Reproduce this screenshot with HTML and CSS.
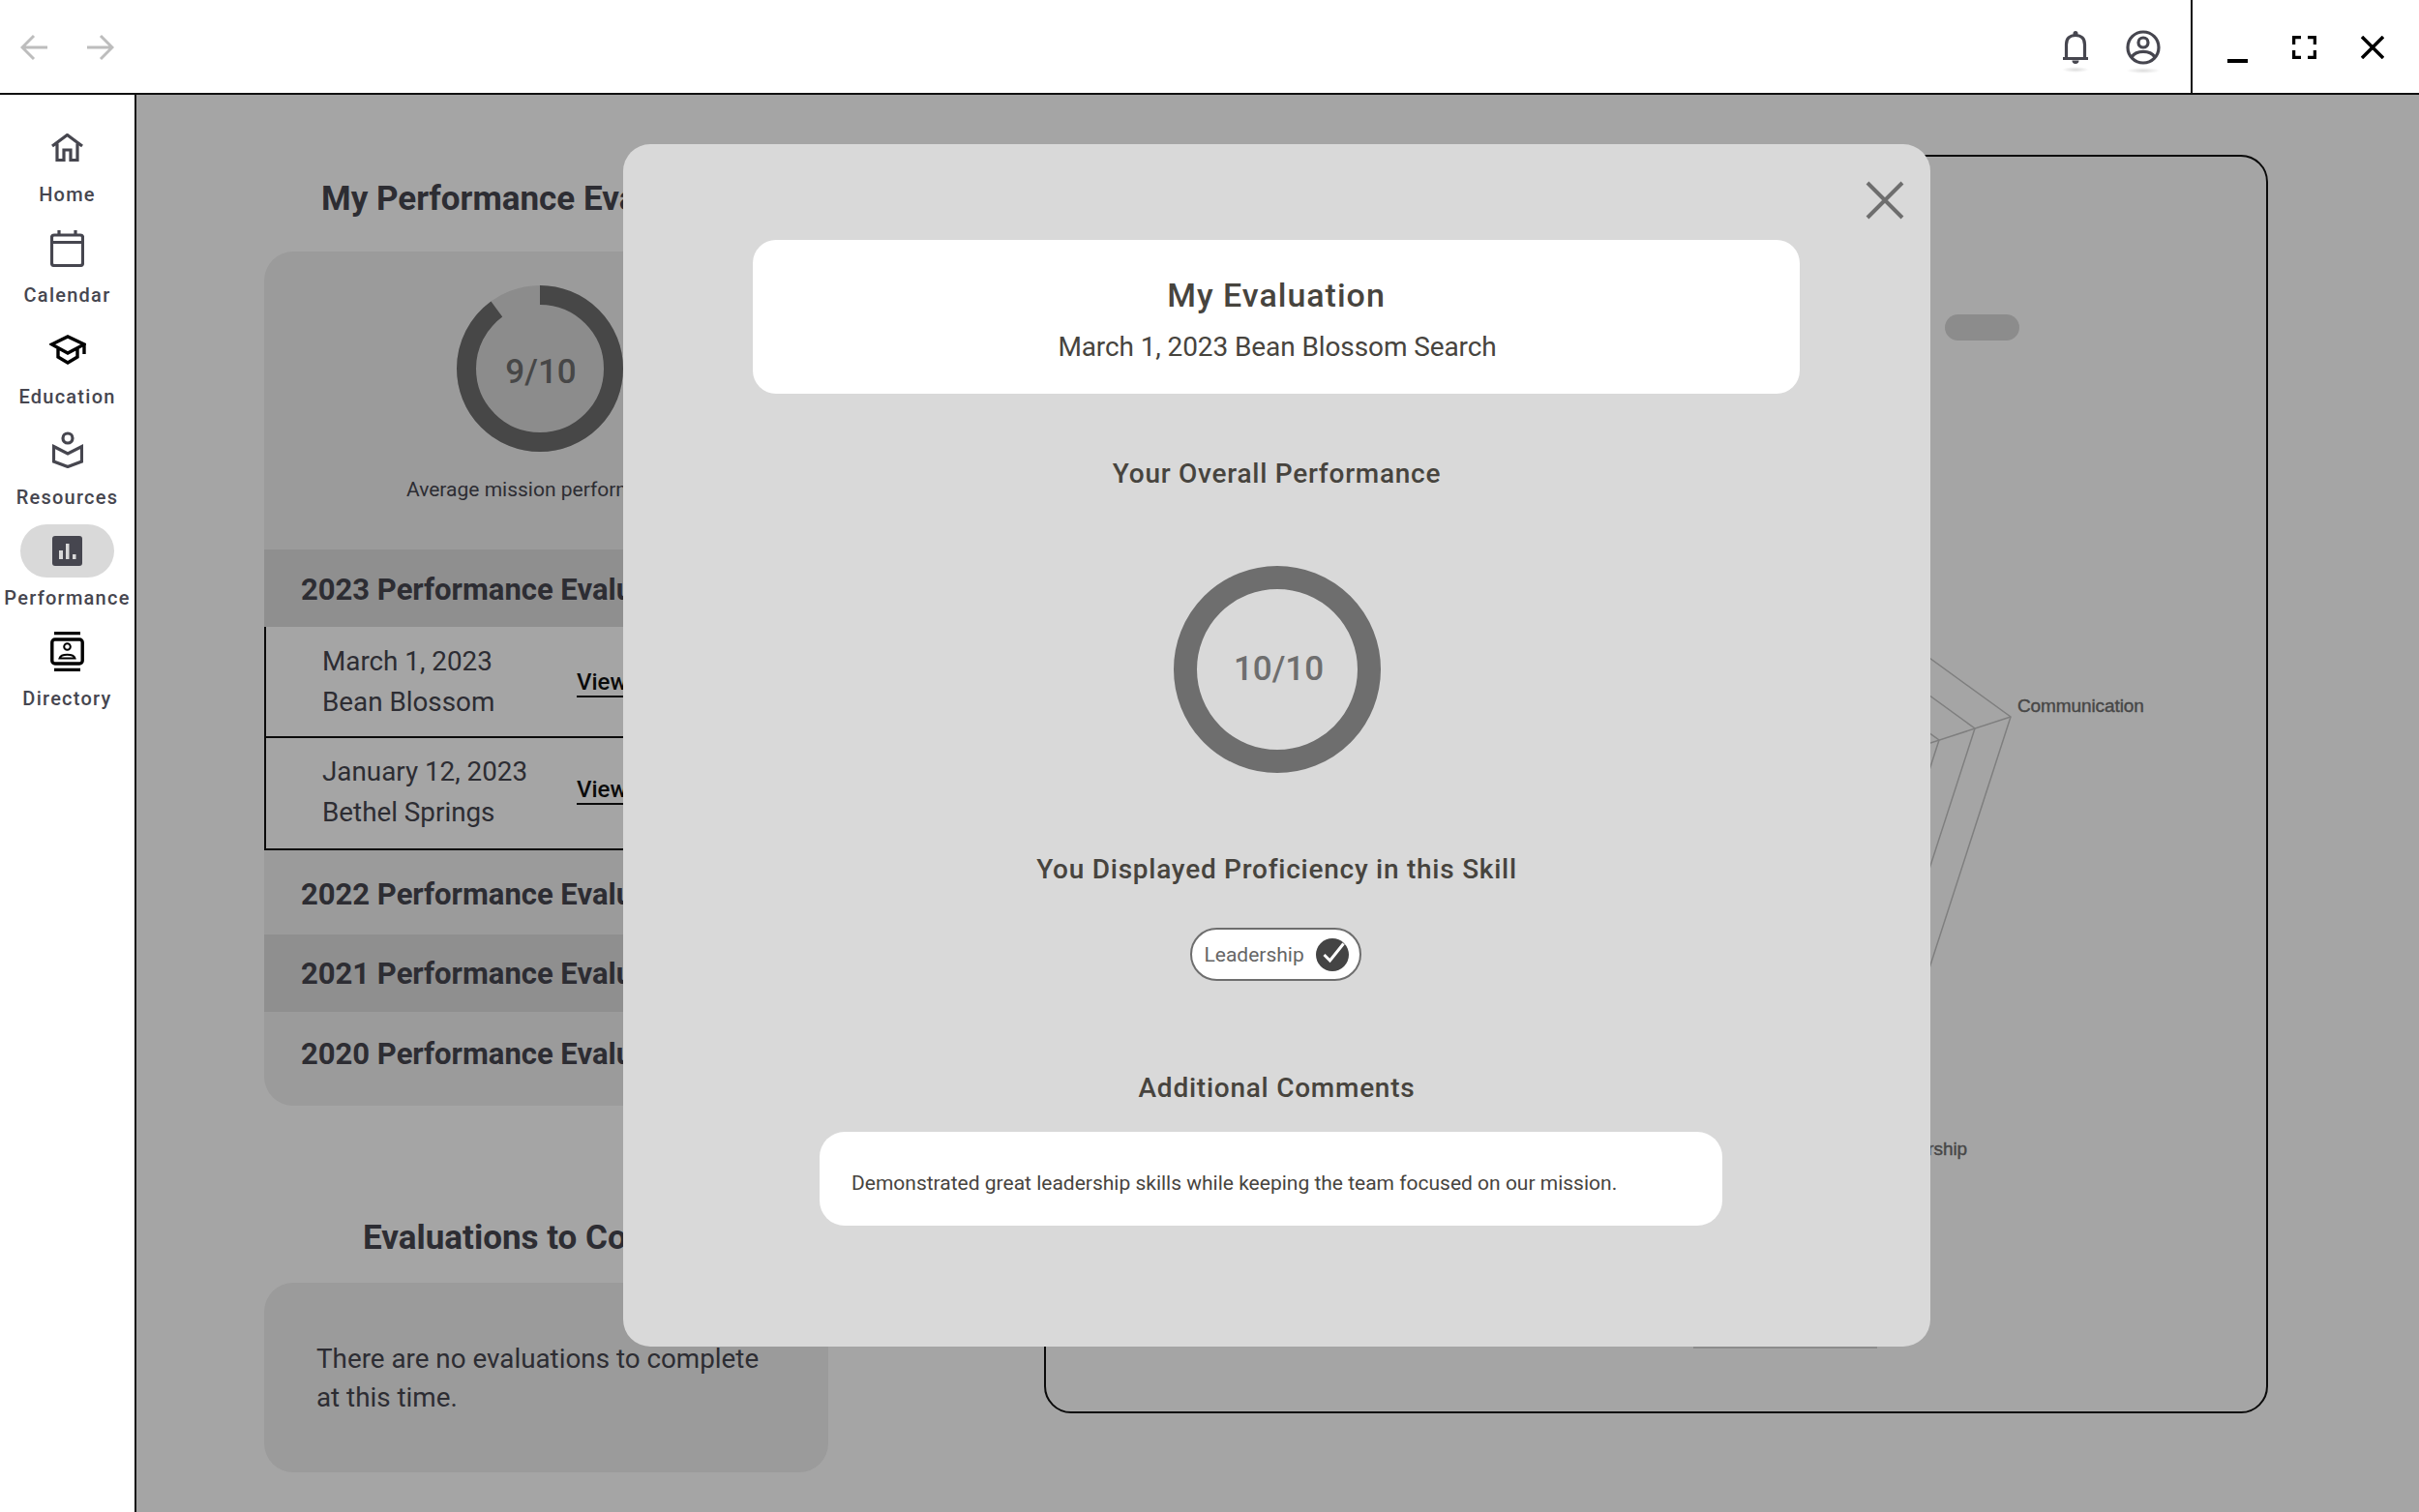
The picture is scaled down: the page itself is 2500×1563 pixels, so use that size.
FILE: index.html
```html
<!DOCTYPE html>
<html lang="en">
<head>
    <meta charset="UTF-8">
    <meta name="viewport" content="width=device-width, initial-scale=1.0">
    <title>My Evaluation</title>
    <link rel="stylesheet" href="styles.css">
</head>
<body>
    <header class="topbar">
        <div class="history">
            <svg width="28" height="28" viewBox="0 0 28 28"><path d="M28 14H2M14 2 2 14l12 12"/></svg>
            <svg width="28" height="28" viewBox="0 0 28 28"><path d="M0 14h26M14 2l12 12-12 12"/></svg>
        </div>
        <div class="top-icons">
            <span class="top-icon">
                <svg width="28" height="34" viewBox="0 0 28 34"><circle class="solid" cx="14" cy="2.5" r="2.5"/><path d="M4.5 28V14C4.5 8 8 4.5 14 4.5S23.500 8 23.500 14V28M1 28.500H27"/><path class="solid" d="M10.500 30.500h7a3.500 3.500 0 0 1-7 0z"/></svg>
            </span>
            <span class="top-icon">
                <svg width="36" height="36" viewBox="0 0 36 36"><circle cx="18" cy="18" r="16"/><circle cx="18" cy="13" r="5"/><path d="M6 28c5-7.500 19-7.500 24 0"/></svg>
            </span>
        </div>
        <div class="win-controls">
            <span class="win-min"></span>
            <svg width="25" height="24" viewBox="0 0 25 24"><path d="M1.500 9V1.500H9M16 1.500h7.500V9M23.500 15v7.500H16M9 22.500H1.500V15"/></svg>
            <svg width="24" height="24" viewBox="0 0 24 24"><path d="M1 1l22 22M23 1 1 23"/></svg>
        </div>
    </header>

    <div class="layout">
        <nav class="sidebar">
            <a class="nav-item" href="#">
                <span class="nav-icon">
                    <svg width="33" height="29" viewBox="0 0 33 29"><path d="M1 13 16.500 1.500 32 13M6 10.500V27.500H13V17H20V27.500H27V10.500"/></svg>
                </span>
                <span class="nav-label">Home</span>
            </a>
            <a class="nav-item" href="#">
                <span class="nav-icon">
                    <svg width="35" height="38" viewBox="0 0 35 38"><rect x="1.500" y="5" width="32" height="31.500" rx="2.500"/><path d="M1.500 12.500h32M9 0v5M26 0v5"/></svg>
                </span>
                <span class="nav-label">Calendar</span>
            </a>
            <a class="nav-item" href="#">
                <span class="nav-icon icon-black">
                    <svg width="38" height="31" viewBox="0 0 38 31"><path d="M2.500 10 19 2l17 8-17 9zM9 14.500V23l10 6 10-6v-8.500M36 10v10"/></svg>
                </span>
                <span class="nav-label">Education</span>
            </a>
            <a class="nav-item" href="#">
                <span class="nav-icon">
                    <svg width="32" height="38" viewBox="0 0 32 38"><circle cx="16" cy="7" r="5"/><path d="M1.500 15.500 16 23l14.500-7.500V31L16 36.500 1.500 31z"/></svg>
                </span>
                <span class="nav-label">Resources</span>
            </a>
            <a class="nav-item active" href="#">
                <span class="nav-icon">
                    <svg width="31" height="31" viewBox="0 0 31 31"><rect class="solid" width="31" height="31" rx="3"/><path class="bars" d="M7 15h4v9H7zM14 8h3.500v16H14zM21 19h3.500v5H21z"/></svg>
                </span>
                <span class="nav-label">Performance</span>
            </a>
            <a class="nav-item" href="#">
                <span class="nav-icon icon-black">
                    <svg width="35" height="41" viewBox="0 0 35 41"><path d="M4 1.500h27M4 39.500h27"/><rect x="1.800" y="8" width="31.400" height="25" rx="3"/><circle class="thin" cx="17.500" cy="15.500" r="3.300"/><path class="thin" d="M9.500 27.500c1.500-5 14.500-5 16 0z"/></svg>
                </span>
                <span class="nav-label">Directory</span>
            </a>
        </nav>

        <main class="main">
            <section class="left-col">
                <h2 class="section-title title-perf">My Performance Evaluations</h2>
                <div class="card">
                    <div class="summary">
                        <div class="score-ring">
                            <svg width="172" height="172" viewBox="0 0 172 172">
                                <circle class="ring-track" cx="86" cy="86" r="76"/>
                                <circle class="ring-value" cx="86" cy="86" r="76" pathLength="100" stroke-dasharray="90 10" transform="rotate(-90 86 86)"/>
                            </svg>
                            <span>9/10</span>
                        </div>
                        <p class="summary-note">Average mission performance</p>
                    </div>
                    <div class="year-row shaded first">2023 Performance Evaluations</div>
                    <div class="eval-list">
                        <div class="eval-row">
                            <div class="eval-info">March 1, 2023<br>Bean Blossom</div>
                            <a class="view-link" href="#">View</a>
                        </div>
                        <div class="eval-row second">
                            <div class="eval-info">January 12, 2023<br>Bethel Springs</div>
                            <a class="view-link" href="#">View</a>
                        </div>
                    </div>
                    <div class="year-row year-2022">2022 Performance Evaluations</div>
                    <div class="year-row shaded">2021 Performance Evaluations</div>
                    <div class="year-row year-2020">2020 Performance Evaluations</div>
                </div>

                <h2 class="section-title title-todo">Evaluations to Complete</h2>
                <div class="card todo-card">There are no evaluations to complete at this time.</div>
            </section>

            <section class="chart-panel">
                <svg class="radar" width="1263" height="1297" viewBox="0 0 1263 1297">
                    <rect class="chart-pill" x="929" y="163" width="77" height="27" rx="13.500"/>
                    <rect class="chart-pill" x="669" y="1192" width="190" height="40"/>
                    <g transform="translate(632 698)">
                        <polygon points="0,-384 365,-119 226,311 -226,311 -365,-119"/>
                        <polygon points="0,-345 328,-107 203,279 -203,279 -328,-107"/>
                        <polygon points="0,-306 291,-95 180,248 -180,248 -291,-95"/>
                        <line x1="0" y1="0" x2="365" y2="-119"/>
                        <text x="372" y="-124">Communication</text>
                        <text x="320" y="334" text-anchor="end">Leadership</text>
                    </g>
                </svg>
            </section>

            <div class="overlay"></div>

            <div class="modal">
                <button class="modal-close" aria-label="Close">
                    <svg width="40" height="40" viewBox="0 0 40 40"><path d="M2 2l36 36M38 2 2 38"/></svg>
                </button>
                <div class="modal-head">
                    <h1>My Evaluation</h1>
                    <p>March 1, 2023 Bean Blossom Search</p>
                </div>
                <h3 class="modal-label label-overall">Your Overall Performance</h3>
                <div class="score-ring big">
                    <svg width="214" height="214" viewBox="0 0 214 214"><circle cx="107" cy="107" r="95"/></svg>
                    <span>10/10</span>
                </div>
                <h3 class="modal-label label-skill">You Displayed Proficiency in this Skill</h3>
                <div class="skill-pill">
                    <span>Leadership</span>
                    <svg width="34" height="34" viewBox="0 0 34 34"><circle cx="17" cy="17" r="17"/><path d="M8.500 17l6 6L28.500 5.500"/></svg>
                </div>
                <h3 class="modal-label label-comments">Additional Comments</h3>
                <div class="comment-box">Demonstrated great leadership skills while keeping the team focused on our mission.</div>
            </div>
        </main>
    </div>
</body>
</html>
```

FILE: styles.css
```css
* {
    box-sizing: border-box;
}
body {
    margin: 0;
    width: 2500px;
    height: 1563px;
    overflow: hidden;
    background: white;
    font-family: Roboto, sans-serif;
    color: #46464f;
    display: flex;
    flex-direction: column;
}
svg {
    display: block;
    fill: none;
}

/* top bar */
.topbar {
    height: 98px;
    border-bottom: 2px solid #111;
    display: flex;
    align-items: center;
    flex-shrink: 0;
}
.history {
    display: flex;
    gap: 41px;
    padding-left: 21px;
    margin: 2px auto 0 0;
}
.history path {
    stroke: #bdbdbd;
    stroke-width: 3;
}
.top-icons {
    display: flex;
    align-items: center;
    gap: 38px;
    margin: 2px 31px 0 0;
}
.top-icon {
    position: relative;
}
.top-icon::after {
    content: "";
    position: absolute;
    left: 0;
    right: 0;
    bottom: -9px;
    height: 6px;
    background: radial-gradient(closest-side, rgba(0, 0, 0, 0.14), transparent);
}
.top-icon path,
.top-icon circle {
    stroke: #46464f;
    stroke-width: 3.2;
}
.top-icon .solid {
    fill: #46464f;
    stroke: none;
}
.win-controls {
    width: 236px;
    height: 96px;
    border-left: 2px solid #111;
    display: flex;
    align-items: center;
    padding: 2px 0 0 36px;
    gap: 46px;
}
.win-min {
    width: 21px;
    height: 4px;
    margin-top: 27px;
    background: black;
}
.win-controls path {
    stroke: black;
    stroke-width: 3.5;
}

/* sidebar */
.layout {
    display: flex;
    flex: 1;
    min-height: 0;
}
.sidebar {
    width: 141px;
    flex-shrink: 0;
    border-right: 2px solid #111;
    padding-top: 27px;
}
.nav-item {
    display: flex;
    flex-direction: column;
    align-items: center;
    height: 104.3px;
    color: #46464f;
    text-decoration: none;
}
.nav-icon {
    width: 97px;
    height: 55px;
    border-radius: 28px;
    display: flex;
    align-items: center;
    justify-content: center;
}
.nav-icon path,
.nav-icon rect,
.nav-icon circle {
    stroke: #46464f;
    stroke-width: 3.2;
}
.icon-black path,
.icon-black rect,
.icon-black circle {
    stroke: black;
    stroke-width: 3.4;
}
.nav-icon .thin {
    stroke-width: 2;
}
.nav-icon .solid {
    fill: #46464f;
    stroke: none;
}
.nav-icon .bars {
    fill: #d9d9d9;
    stroke: none;
}
.nav-item.active .nav-icon {
    background: #d9d9d9;
}
.nav-label {
    font-size: 20px;
    font-weight: 500;
    letter-spacing: 1.25px;
    line-height: 24px;
    margin-top: 9px;
    white-space: nowrap;
}

/* page behind the dialog */
.main {
    flex: 1;
    position: relative;
    display: grid;
    grid-template-columns: 583px 1265px;
    column-gap: 223px;
    align-items: start;
    padding: 62px 0 0 132px;
}
.left-col {
    padding-top: 26px;
}
.section-title {
    margin: 0;
    font-size: 35px;
    font-weight: 700;
    line-height: 40px;
    white-space: nowrap;
}
.title-perf {
    padding-left: 59px;
    margin-bottom: 34px;
}
.title-todo {
    padding-left: 102px;
    margin: 117px 0 26px;
}
.card {
    background: #f0f0f0;
    border-radius: 30px;
    overflow: hidden;
}
.summary {
    height: 308px;
    padding: 35px 0 0 147px;
}
.score-ring {
    display: grid;
    place-items: center;
    width: 172px;
    margin-left: 52px;
}
.score-ring > * {
    grid-area: 1 / 1;
}
.score-ring span {
    font-size: 35px;
    font-weight: 500;
    color: #6e6e6e;
    margin: 7px 0 0 2px;
}
.ring-track {
    fill: #d9d9d9;
    stroke: #d9d9d9;
    stroke-width: 20;
}
.ring-value {
    stroke: #6e6e6e;
    stroke-width: 20;
}
.summary-note {
    margin: 26px 0 0;
    font-size: 21px;
    line-height: 26px;
    white-space: nowrap;
}
.year-row {
    height: 80px;
    display: flex;
    align-items: center;
    padding-left: 38px;
    font-size: 31px;
    font-weight: 700;
    white-space: nowrap;
}
.shaded {
    background: #dddddd;
}
.first {
    padding-top: 2px;
}
.year-2022 {
    height: 87px;
    padding-top: 3px;
}
.year-2020 {
    height: 97px;
    padding-bottom: 11px;
}
.eval-list {
    background: white;
    border-left: 2px solid #111;
}
.eval-row {
    height: 115px;
    display: flex;
    align-items: center;
    padding-left: 58px;
    border-bottom: 2px solid #111;
    font-size: 27.8px;
    line-height: 42px;
}
.eval-row.second {
    height: 116px;
    padding-bottom: 2px;
}
.eval-info {
    width: 263px;
}
.view-link {
    font-size: 24px;
    font-weight: 500;
    line-height: 28px;
    color: #111;
    text-decoration: none;
    padding-top: 2px;
    border-bottom: 2px solid #111;
}
.second .view-link {
    margin-bottom: 7px;
}
.todo-card {
    height: 196px;
    padding: 59px 66px 0 54px;
    font-size: 27.8px;
    line-height: 40px;
}

/* radar chart */
.chart-panel {
    height: 1301px;
    border: 2px solid #111;
    border-radius: 28px;
}
.radar polygon,
.radar line {
    stroke: #c4c4c4;
    stroke-width: 1.5;
}
.radar text {
    fill: #6e6e6e;
    stroke: #6e6e6e;
    stroke-width: 0.4;
    font-family: "Liberation Sans", sans-serif;
    font-size: 19px;
    letter-spacing: -0.1px;
}
.chart-pill {
    fill: #d9d9d9;
}

/* dialog */
.overlay {
    position: absolute;
    inset: 0;
    background: rgba(0, 0, 0, 0.353);
}
.modal {
    position: absolute;
    left: 503px;
    top: 51px;
    width: 1351px;
    height: 1243px;
    padding-top: 99px;
    background: #d9d9d9;
    border-radius: 28px;
    display: flex;
    flex-direction: column;
    align-items: center;
    color: #47443e;
}
.modal-close {
    position: absolute;
    top: 38px;
    right: 27px;
    padding: 0;
    border: none;
    background: none;
}
.modal-close path {
    stroke: #6e6e6e;
    stroke-width: 4;
}
.modal-head {
    width: 1082px;
    height: 159px;
    margin-right: 1px;
    padding-top: 37px;
    background: white;
    border-radius: 24px;
    text-align: center;
}
.modal-head h1 {
    margin: 0;
    font-size: 34px;
    font-weight: 500;
    letter-spacing: 1px;
    line-height: 40px;
}
.modal-head p {
    margin: 17px 0 0;
    padding-left: 2px;
    font-size: 28px;
    letter-spacing: -0.1px;
    line-height: 34px;
}
.modal-label {
    margin: 0;
    font-size: 28px;
    font-weight: 500;
    letter-spacing: 0.75px;
    line-height: 34px;
}
.label-overall {
    margin: 66px 0 78px;
}
.label-skill {
    margin: 83px 0 43px;
}
.label-comments {
    margin: 94px 0 28px;
}
.score-ring.big {
    width: 214px;
    margin-left: 0;
}
.big span {
    margin: 0 0 1px 4px;
}
.big circle {
    stroke: #6e6e6e;
    stroke-width: 24;
}
.skill-pill {
    width: 177px;
    height: 55px;
    margin-right: 3px;
    padding-left: 13px;
    background: white;
    border: 2px solid #6e6e6e;
    border-radius: 28px;
    display: flex;
    align-items: center;
    gap: 12px;
    font-size: 21px;
    color: #666;
}
.skill-pill circle {
    fill: #444;
}
.skill-pill path {
    stroke: white;
    stroke-width: 3;
}
.comment-box {
    width: 933px;
    height: 97px;
    margin-right: 12px;
    padding: 40px 0 0 33px;
    background: white;
    border-radius: 26px;
    font-size: 21px;
    font-weight: 450;
    line-height: 26px;
}
```
